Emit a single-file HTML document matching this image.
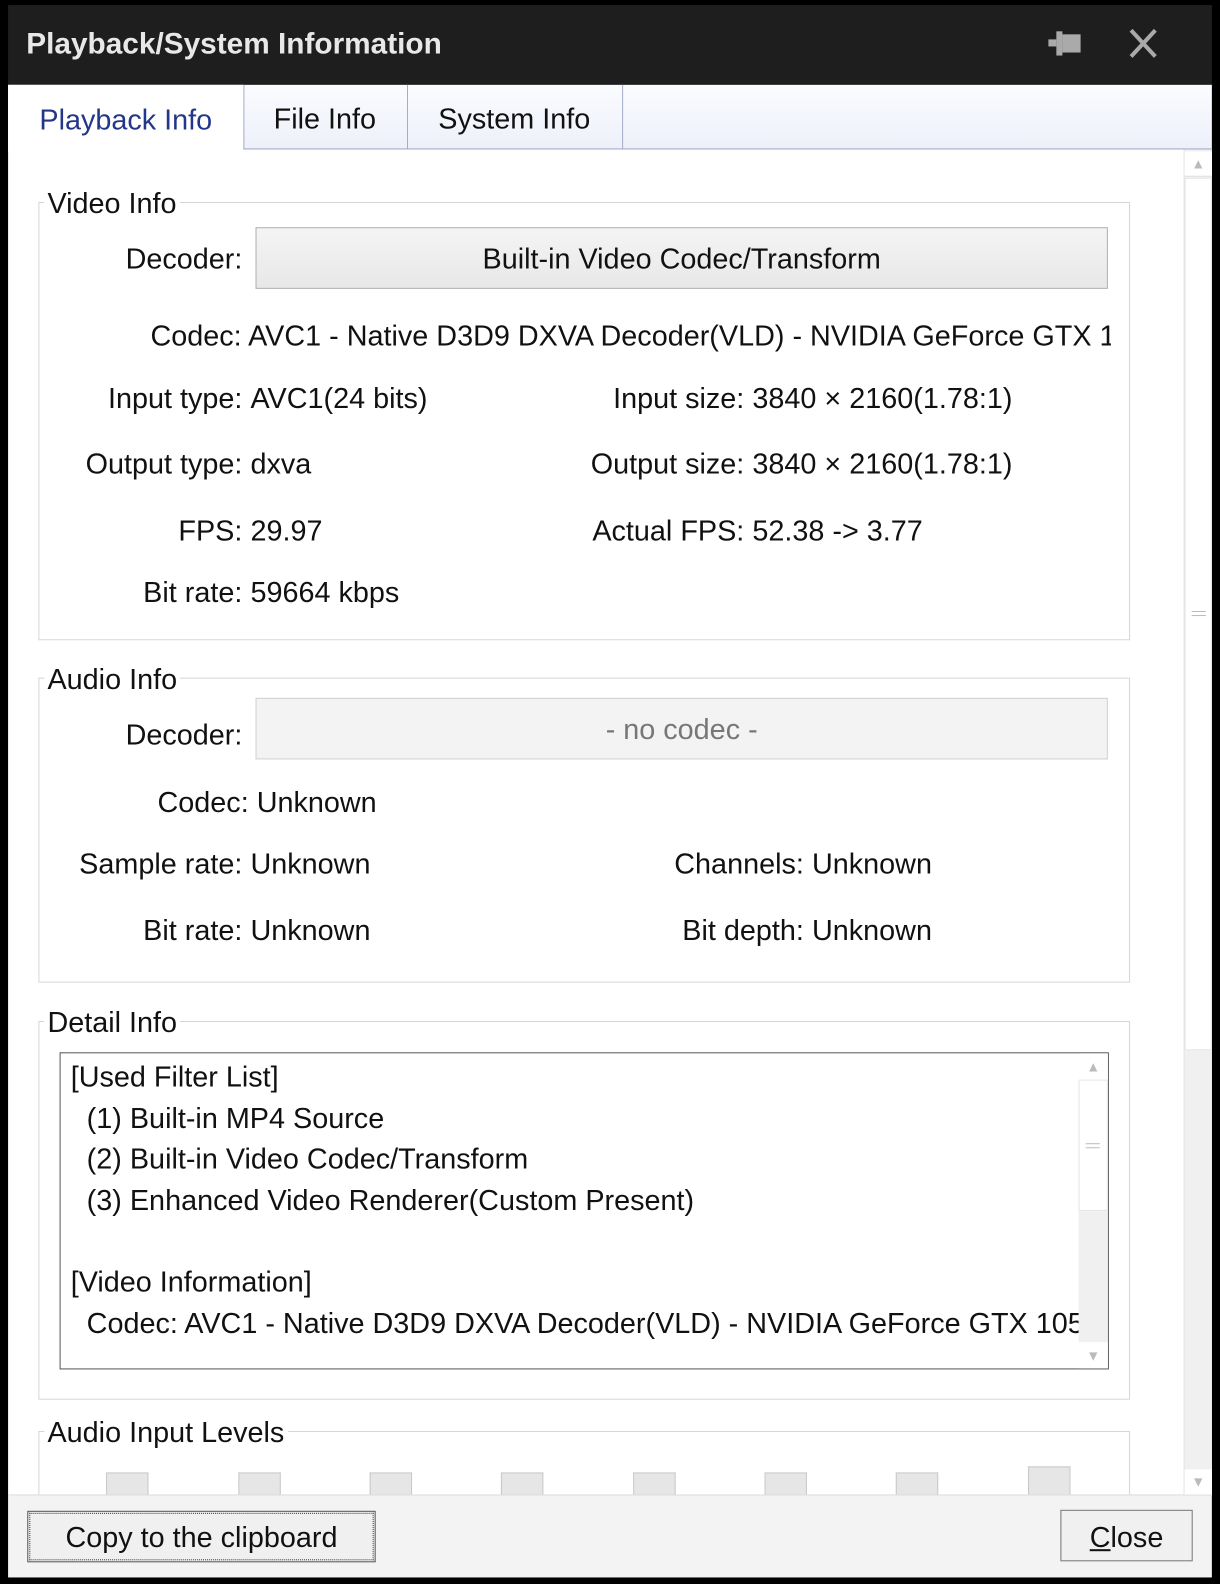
<!DOCTYPE html>
<html><head><meta charset="utf-8"><style>
*{margin:0;padding:0;box-sizing:border-box}
body{width:1220px;height:1584px;background:#000;overflow:hidden;font-family:"Liberation Sans",sans-serif;}
#w{position:absolute;left:0;top:0;width:1208px;height:1568px;transform:scale(1.0099);transform-origin:0 0;}
.a{position:absolute;white-space:nowrap}
.t{font-size:28.5px;color:#111;line-height:32px}
.r{text-align:right}
.gb{position:absolute;border:1px solid #d6d6d6;}
.gl{position:absolute;background:#fff;padding:0 3px;font-size:28.5px;line-height:32px;color:#111}
.bar{position:absolute;width:42px;background:#e6e6e6;border:1px solid #c8c8c8;border-bottom:none}
</style></head><body><div id="w">
<div class="a" style="left:8px;top:5px;width:1192px;height:79px;background:#1e1e1e"></div>
<div class="a" style="left:26px;top:27px;font-size:29.5px;font-weight:bold;color:#e8e8e8">Playback/System Information</div>
<svg class="a" style="left:1038px;top:28px" width="36" height="30"><rect x="0" y="11" width="8" height="7" fill="#aaa"/><rect x="8" y="3" width="6" height="24" fill="#aaa"/><rect x="14" y="6" width="18" height="18" fill="#aaa"/></svg>
<svg class="a" style="left:1117px;top:28px" width="30" height="30"><path d="M3 2L27 28M27 2L3 28" stroke="#aaa" stroke-width="4"/></svg>
<div class="a" style="left:8px;top:84px;width:1192px;height:64px;background:linear-gradient(#fbfcff,#edf0fa)"></div>
<div class="a" style="left:8px;top:84px;width:233px;height:66px;background:#fff"></div>
<div class="a" style="left:241px;top:84px;width:163px;height:64px;border-left:1px solid #a6acc8;border-right:1px solid #a6acc8"></div>
<div class="a" style="left:404px;top:84px;width:213px;height:64px;border-right:1px solid #a6acc8"></div>
<div class="a" style="left:241px;top:147px;width:959px;height:1px;background:#9aa2c2"></div>
<div class="a t" style="left:39px;top:103px;color:#24368a">Playback Info</div>
<div class="a t" style="left:271px;top:102px">File Info</div>
<div class="a t" style="left:434px;top:102px">System Info</div>
<div class="a" style="left:8px;top:148px;width:1192px;height:1332px;background:#fff"></div>
<div class="a" style="left:1172px;top:148px;width:28px;height:1332px;background:#f0f0f0;border-left:1px solid #e4e4e4"></div>
<div class="a" style="left:1173px;top:176px;width:27px;height:864px;background:#fff;border:1px solid #e4e4e4"></div>
<div class="a" style="left:1173px;top:150px;width:27px;height:25px;background:#fff;border-bottom:1px solid #ddd;color:#bbb;font-size:14px;text-align:center;line-height:25px">▲</div>
<div class="a" style="left:1180px;top:605px;width:14px;height:5px;border-top:1px solid #bbb;border-bottom:1px solid #bbb"></div>
<div class="a" style="left:1173px;top:1455px;width:27px;height:25px;background:#fff;color:#bbb;font-size:14px;text-align:center;line-height:25px">▼</div>
<div class="gb" style="left:38px;top:200px;width:1081px;height:434px"></div>
<div class="gl" style="left:44px;top:186px">Video Info</div>
<div class="a t r" style="left:20px;width:220px;top:241px">Decoder:</div>
<div class="a" style="left:253px;top:225px;width:844px;height:61px;border:1px solid #adadad;background:linear-gradient(#f4f4f4,#e8e8e8)"></div>
<div class="a t" style="left:253px;width:844px;top:241px;text-align:center">Built-in Video Codec/Transform</div>
<div class="a t" style="left:149px;top:317px;width:951px;overflow:hidden">Codec: AVC1 - Native D3D9 DXVA Decoder(VLD) - NVIDIA GeForce GTX 1050</div>
<div class="a t r" style="left:20px;width:220px;top:379px">Input type:</div><div class="a t" style="left:248px;top:379px">AVC1(24 bits)</div>
<div class="a t r" style="left:20px;width:220px;top:444px">Output type:</div><div class="a t" style="left:248px;top:444px">dxva</div>
<div class="a t r" style="left:20px;width:220px;top:510px">FPS:</div><div class="a t" style="left:248px;top:510px">29.97</div>
<div class="a t r" style="left:20px;width:220px;top:571px">Bit rate:</div><div class="a t" style="left:248px;top:571px">59664 kbps</div>
<div class="a t r" style="left:480px;width:257px;top:379px">Input size:</div><div class="a t" style="left:745px;top:379px">3840 × 2160(1.78:1)</div>
<div class="a t r" style="left:480px;width:257px;top:444px">Output size:</div><div class="a t" style="left:745px;top:444px">3840 × 2160(1.78:1)</div>
<div class="a t r" style="left:480px;width:257px;top:510px">Actual FPS:</div><div class="a t" style="left:745px;top:510px">52.38 -&gt; 3.77</div>
<div class="gb" style="left:38px;top:671px;width:1081px;height:302px"></div>
<div class="gl" style="left:44px;top:657px">Audio Info</div>
<div class="a t r" style="left:20px;width:220px;top:712px">Decoder:</div>
<div class="a" style="left:253px;top:691px;width:844px;height:61px;border:1px solid #d0d0d0;background:#f3f3f3"></div>
<div class="a t" style="left:253px;width:844px;top:707px;text-align:center;color:#777">- no codec -</div>
<div class="a t r" style="left:20px;width:353px;top:779px">Codec: Unknown</div>
<div class="a t r" style="left:20px;width:220px;top:840px">Sample rate:</div><div class="a t" style="left:248px;top:840px">Unknown</div>
<div class="a t r" style="left:20px;width:220px;top:906px">Bit rate:</div><div class="a t" style="left:248px;top:906px">Unknown</div>
<div class="a t r" style="left:480px;width:316px;top:840px">Channels:</div><div class="a t" style="left:804px;top:840px">Unknown</div>
<div class="a t r" style="left:480px;width:316px;top:906px">Bit depth:</div><div class="a t" style="left:804px;top:906px">Unknown</div>
<div class="gb" style="left:38px;top:1011px;width:1081px;height:375px"></div>
<div class="gl" style="left:44px;top:997px">Detail Info</div>
<div class="a" style="left:59px;top:1042px;width:1039px;height:314px;border:1px solid #555;background:#fff;overflow:hidden">
 <div style="position:absolute;left:10px;top:4px;font-size:28.5px;line-height:40.6px;color:#111;white-space:pre">[Used Filter List]
  (1) Built-in MP4 Source
  (2) Built-in Video Codec/Transform
  (3) Enhanced Video Renderer(Custom Present)

[Video Information]
  Codec: AVC1 - Native D3D9 DXVA Decoder(VLD) - NVIDIA GeForce GTX 1050</div>
 <div style="position:absolute;left:1008px;top:0;width:29px;height:312px;background:#f0f0f0"></div>
 <div style="position:absolute;left:1008px;top:26px;width:29px;height:130px;background:#fff;border:1px solid #e4e4e4"></div>
 <div style="position:absolute;left:1008px;top:0;width:29px;height:26px;background:#fff;color:#bbb;font-size:14px;text-align:center;line-height:26px">▲</div>
 <div style="position:absolute;left:1008px;top:286px;width:29px;height:26px;background:#fff;color:#bbb;font-size:14px;text-align:center;line-height:26px">▼</div>
 <div style="position:absolute;left:1015px;top:89px;width:14px;height:5px;border-top:1px solid #bbb;border-bottom:1px solid #bbb"></div>
</div>
<div class="gb" style="left:38px;top:1417px;width:1081px;height:100px;border-bottom:none"></div>
<div class="gl" style="left:44px;top:1403px">Audio Input Levels</div>
<div class="bar" style="left:105px;top:1458px;height:22px"></div>
<div class="bar" style="left:236px;top:1458px;height:22px"></div>
<div class="bar" style="left:366px;top:1458px;height:22px"></div>
<div class="bar" style="left:496px;top:1458px;height:22px"></div>
<div class="bar" style="left:627px;top:1458px;height:22px"></div>
<div class="bar" style="left:757px;top:1458px;height:22px"></div>
<div class="bar" style="left:887px;top:1458px;height:22px"></div>
<div class="bar" style="left:1018px;top:1452px;height:28px"></div>
<div class="a" style="left:8px;top:1480px;width:1192px;height:82px;background:#f3f3f3;border-top:1px solid #e2e2e2"></div>
<div class="a" style="left:27px;top:1496px;width:345px;height:51px;border:1px solid #555;background:#f0f0f0"><div style="position:absolute;inset:1px;border:1px dotted #333"></div></div>
<div class="a t" style="left:27px;width:345px;top:1507px;text-align:center">Copy to the clipboard</div>
<div class="a" style="left:1050px;top:1495px;width:131px;height:51px;border:1px solid #777;background:#f0f0f0"></div>
<div class="a t" style="left:1050px;width:131px;top:1507px;text-align:center"><u>C</u>lose</div>
</div></body></html>
